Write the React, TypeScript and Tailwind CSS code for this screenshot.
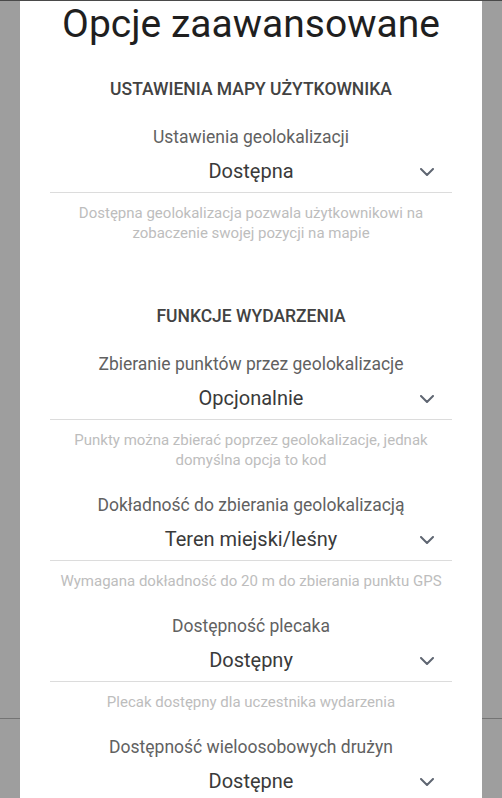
import React from "react";

interface Field {
  label: string;
  value: string;
  help?: string;
}

interface Section {
  title: string;
  fields: Field[];
}

const sections: Section[] = [
  {
    title: "Ustawienia mapy użytkownika",
    fields: [
      {
        label: "Ustawienia geolokalizacji",
        value: "Dostępna",
        help: "Dostępna geolokalizacja pozwala użytkownikowi na zobaczenie swojej pozycji na mapie",
      },
    ],
  },
  {
    title: "Funkcje wydarzenia",
    fields: [
      {
        label: "Zbieranie punktów przez geolokalizacje",
        value: "Opcjonalnie",
        help: "Punkty można zbierać poprzez geolokalizacje, jednak domyślna opcja to kod",
      },
      {
        label: "Dokładność do zbierania geolokalizacją",
        value: "Teren miejski/leśny",
        help: "Wymagana dokładność do 20 m do zbierania punktu GPS",
      },
      {
        label: "Dostępność plecaka",
        value: "Dostępny",
        help: "Plecak dostępny dla uczestnika wydarzenia",
      },
      {
        label: "Dostępność wieloosobowych drużyn",
        value: "Dostępne",
      },
    ],
  },
];

const Chevron = () => (
  <svg width="14" height="8" viewBox="0 0 14 8" fill="none">
    <path
      d="M1 1L7 7L13 1"
      stroke="#5f6672"
      strokeWidth="2"
      strokeLinecap="round"
      strokeLinejoin="round"
    />
  </svg>
);

const SelectField: React.FC<{ field: Field; first: boolean }> = ({
  field,
  first,
}) => (
  <div className={first ? "mt-[24px]" : "mt-[23px]"}>
    <div className="text-center text-[17.5px] leading-[24px] text-[#616161]">
      {field.label}
    </div>

    <div className="relative border-b border-[#dcdcdc] pt-[8px] pb-[7px] text-center text-[20px] leading-[28px] text-[#3a3a3a]">
      {field.value}
      <span className="absolute right-[18px] top-[19px] flex">
        <Chevron />
      </span>
    </div>

    {field.help && (
      <p className="mt-[10px] text-center text-[15px] leading-[20px] text-[#bdbdbd]">
        {field.help}
      </p>
    )}
  </div>
);

export default function App() {
  return (
    <div
      className="relative h-[798px] overflow-hidden border-t border-[#4a4a4a] bg-[#9e9e9e]"
      style={{ fontFamily: "Roboto, 'Noto Sans', sans-serif" }}
    >
      {/* page behind the overlay */}
      <div className="h-[718px] border-b border-[#747474]" />

      {/* Modal */}
      <div className="absolute bottom-0 left-[20px] right-[20px] top-0 overflow-hidden bg-white px-[30px]">
        <h1 className="text-center text-[39px] leading-[46px] text-[#1f1f1f]">
          Opcje zaawansowane
        </h1>

        {sections.map((section, i) => (
          <section key={section.title} className={i === 0 ? "mt-[30px]" : "mt-[61px]"}>
            <h2 className="text-center text-[17.5px] font-medium uppercase leading-[24px] text-[#424242]">
              {section.title}
            </h2>

            {section.fields.map((field, j) => (
              <SelectField key={field.label} field={field} first={j === 0} />
            ))}
          </section>
        ))}
      </div>
    </div>
  );
}
